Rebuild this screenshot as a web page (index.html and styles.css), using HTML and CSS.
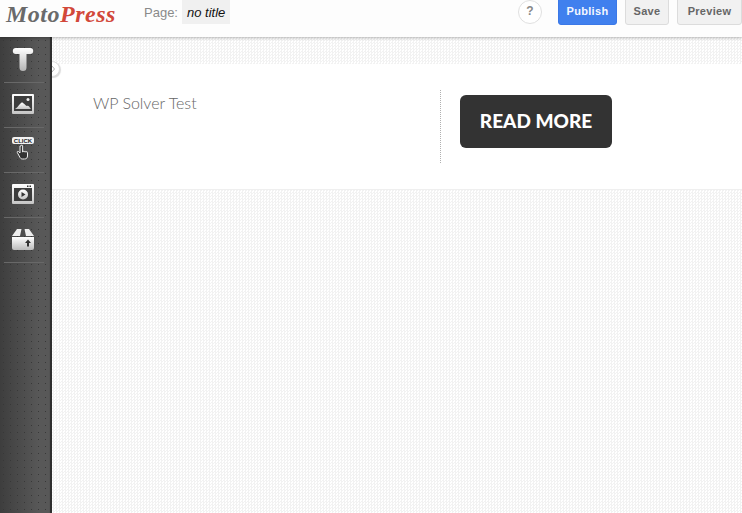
FILE: index.html
```html
<!DOCTYPE html>
<html lang="en">
<head>
<meta charset="utf-8">
<title>MotoPress</title>
<link rel="stylesheet" href="styles.css">
</head>
<body>
<header class="topbar">
  <div class="logo"><span class="logo-moto">Moto</span><span class="logo-press">Press</span></div>
  <div class="page-info"><span class="page-label">Page:</span><span class="page-title">no title</span></div>
  <div class="actions">
    <span class="help">?</span>
    <button class="btn btn-primary">Publish</button>
    <button class="btn btn-save">Save</button>
    <button class="btn btn-preview">Preview</button>
  </div>
</header>
<div class="workspace">
  <nav class="toolbar">
    <div class="tool">
      <svg width="22" height="24" viewBox="0 0 22 24"><defs><linearGradient id="g1" x1="0" y1="0" x2="0" y2="1"><stop offset="0" stop-color="#fff"/><stop offset="1" stop-color="#b5b5b5"/></linearGradient></defs><path d="M3.800 1h14.400a2.800 2.800 0 0 1 0 6h-3.700v13.500a3.500 3.500 0 0 1-7 0V7H3.800a2.800 2.800 0 0 1 0-6z" fill="url(#g1)"/></svg>
    </div>
    <div class="tool">
      <svg width="22" height="20" viewBox="0 0 22 20"><defs><linearGradient id="g2" x1="0" y1="0" x2="0" y2="1"><stop offset="0" stop-color="#fff"/><stop offset="1" stop-color="#c4c4c4"/></linearGradient></defs><path fill-rule="evenodd" d="M1 0h20a1 1 0 0 1 1 1v18a1 1 0 0 1-1 1H1a1 1 0 0 1-1-1V1a1 1 0 0 1 1-1zM2 2v15h18V2z" fill="url(#g2)"/><rect x="2" y="2" width="18" height="15" fill="#3d3d3d"/><path d="M3 15c2-1 3-3 5-5 1-1 2-2 3-1 2 1 3 3 4 3 1-1 2 0 4 3z" fill="url(#g2)"/><circle cx="16" cy="5.500" r="1.500" fill="#eee"/></svg>
    </div>
    <div class="tool">
      <svg width="22" height="24" viewBox="0 0 22 24"><rect x="0" y="0" width="22" height="7" rx="2" fill="#f2f2f2"/><text x="11" y="6" class="click-text" text-anchor="middle">CLICK</text><path d="M8 9v7l-1.500-1.500c-1-.6-1.800.4-1 1.400L8 20.500c.6.800 1 1.500 2.500 1.500h2c2 0 3-1.300 3-3v-3.500c0-1.200-1.500-1.200-1.500-.2 0-1.200-1.700-1.200-1.700-.2 0-1.100-1.700-1.100-1.700 0V9c0-1.200-1.600-1.200-1.600 0z" fill="#333" stroke="#eee" stroke-width="1"/></svg>
    </div>
    <div class="tool">
      <svg width="22" height="20" viewBox="0 0 22 20"><defs><linearGradient id="g3" x1="0" y1="0" x2="0" y2="1"><stop offset="0" stop-color="#fff"/><stop offset="1" stop-color="#c4c4c4"/></linearGradient></defs><rect width="22" height="20" rx="1" fill="url(#g3)"/><rect x="2" y="4" width="18" height="13" fill="#3d3d3d"/><rect x="15" y="1.500" width="1.500" height="1.500" fill="#333"/><rect x="17.500" y="1.500" width="1.500" height="1.500" fill="#333"/><circle cx="11" cy="10.500" r="5" fill="url(#g3)"/><path d="M9.500 8l4 2.500-4 2.500z" fill="#333"/></svg>
    </div>
    <div class="tool">
      <svg width="22" height="22" viewBox="0 0 22 22"><defs><linearGradient id="g4" x1="0" y1="0" x2="0" y2="1"><stop offset="0" stop-color="#fff"/><stop offset="1" stop-color="#bbb"/></linearGradient></defs><path d="M0 8l5-7h4.500L8 8zM22 8l-5-7h-4.500L14 8z" fill="#eee"/><path d="M0 9h22v11a2 2 0 0 1-2 2H2a2 2 0 0 1-2-2z" fill="url(#g4)"/><path d="M16 11.500l3 3.500h-2v3.500h-2V15h-2z" fill="#333"/></svg>
    </div>
  </nav>
  <main class="canvas">
    <span class="handle"><svg class="chevron" width="4" height="8" viewBox="0 0 4 8"><path d="M.5.500L3.500 4 .5 7.500" fill="none" stroke="#aaa" stroke-width="1"/></svg></span>
    <section class="band">
      <div class="band-left"><p class="band-text">WP Solver Test</p></div>
      <div class="band-right"><a class="read-more">READ MORE</a></div>
    </section>
  </main>
</div>
</body>
</html>
```
FILE: styles.css
```css
* { box-sizing: border-box; }
html, body { margin: 0; height: 100%; overflow: hidden; }
body {
  width: 742px;
  height: 513px;
  display: flex;
  flex-direction: column;
  font-family: "Liberation Sans", Arial, sans-serif;
  background: #fff;
}
.topbar {
  height: 37px;
  flex: none;
  display: flex;
  align-items: flex-start;
  background: #fdfdfd;
  position: relative;
  z-index: 4;
  box-shadow: 0 1px 3px rgba(0,0,0,.28);
}
.logo {
  width: 144px;
  padding: 3px 0 0 6px;
  font-family: "Liberation Serif", serif;
  font-style: italic;
  font-weight: 700;
  font-size: 24px;
  line-height: 22px;
  letter-spacing: .5px;
  white-space: nowrap;
}
.logo-moto { color: #6a6a6a; }
.logo-press { color: #d2483a; }
.page-info {
  display: flex;
  align-items: center;
  height: 24px;
}
.page-label { color: #8a8a8a; font-size: 13px; width: 38px; }
.page-title {
  height: 24px;
  line-height: 25px;
  padding: 0 5px;
  background: #f0f0f0;
  font-size: 13px;
  font-style: italic;
  color: #111;
}
.actions {
  margin-left: auto;
  display: flex;
  align-items: flex-start;
  margin-top: -3px;
}
.help {
  width: 24px;
  height: 24px;
  margin-top: 3px;
  margin-right: 16px;
  border: 1px solid #e0e0e0;
  border-radius: 50%;
  background: #fff;
  color: #888;
  font-size: 12px;
  font-weight: 700;
  line-height: 21px;
  text-align: center;
}
.btn {
  height: 28px;
  padding: 0 0 1px;
  font: 700 11px "Liberation Sans", Arial, sans-serif;
  letter-spacing: .3px;
  border-radius: 3px;
  border: 1px solid #dcdcdc;
  background: #f1f1f1;
  color: #666;
}
.btn-primary {
  width: 59px;
  margin-right: 8px;
  background: #4080ee;
  border-color: #3b78e7;
  color: #f4f7ff;
}
.btn-save { width: 44px; margin-right: 8px; }
.btn-preview { width: 65px; }
.workspace { flex: 1; display: flex; min-height: 0; }
.toolbar {
  width: 52px;
  flex: none;
  display: flex;
  flex-direction: column;
  padding-top: 1px;
  position: relative;
  z-index: 3;
  background-color: #4c4c4c;
  background-image:
    radial-gradient(circle, #383838 .5px, transparent .9px),
    linear-gradient(90deg, #3e3e3e 0, #585858 75%, #585858 95%, #2e2e2e 97%, #2e2e2e 100%);
  background-size: 7px 7px, 100% 100%;
}
.tool {
  height: 45px;
  margin: 0 8px 0 4px;
  display: flex;
  align-items: center;
  justify-content: center;
  padding: 0 2px 2px 0;
  border-bottom: 1px solid #686868;
}
.click-text {
  font-family: "Liberation Sans", Arial, sans-serif;
  font-size: 6px;
  font-weight: 700;
  fill: #222;
}
.canvas {
  flex: 1;
  position: relative;
  padding-top: 27px;
  background-color: #fff;
  background-image: repeating-conic-gradient(#f2f2f2 0 25%, #fff 0 50%);
  background-size: 3px 3px;
}
.handle {
  position: absolute;
  left: -8px;
  top: 24px;
  width: 16px;
  height: 16px;
  display: flex;
  align-items: center;
  justify-content: flex-end;
  padding-right: 4px;
  border-radius: 50%;
  background: #fff;
  border: 1px solid #ddd;
  box-shadow: 1px 1px 1px rgba(0,0,0,.15);
  z-index: 2;
}
.band {
  height: 126px;
  display: flex;
  background: #fff;
  border-bottom: 1px solid #efefef;
  position: relative;
  z-index: 1;
}
.band-left {
  width: 389px;
  height: 73px;
  margin-top: 26px;
  padding: 3px 0 0 41px;
  border-right: 1px dotted #b0b0b0;
}
.band-text {
  margin: 0;
  font-family: Lato, sans-serif;
  font-weight: 300;
  font-size: 16px;
  line-height: 20px;
  color: #666;
}
.band-right { padding: 31px 0 0 19px; }
.read-more {
  display: block;
  width: 152px;
  height: 53px;
  background: #333;
  border-radius: 6px;
  color: #fff;
  font-family: Lato, sans-serif;
  font-weight: 900;
  font-size: 19px;
  line-height: 52px;
  text-align: center;
}
```
